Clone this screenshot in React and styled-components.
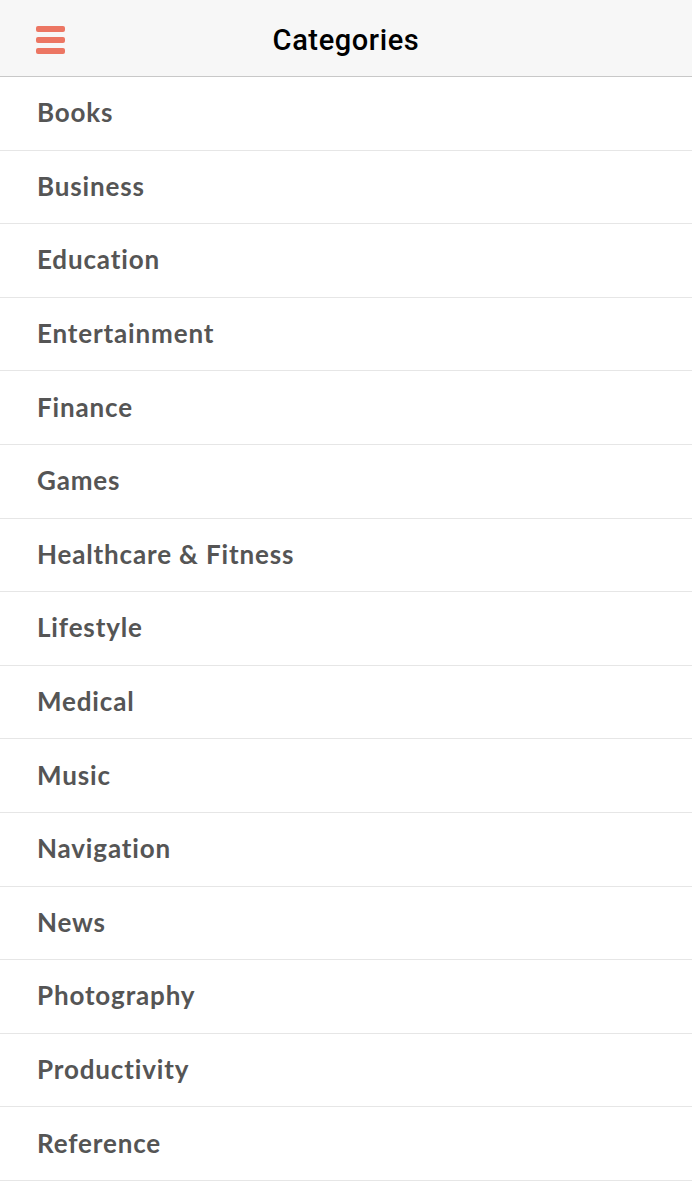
import React from 'react'
import styled, { createGlobalStyle } from 'styled-components'

const GlobalStyle = createGlobalStyle`
  body {
    margin: 0;
    background: #ffffff;
    font-family: 'Lato', 'Noto Sans', sans-serif;
  }
`;

const Screen = styled.div`
  width: 692px;
  height: 1200px;
  overflow: hidden;
  background: #ffffff;
`;

const Header = styled.header`
  height: 77px;
  box-sizing: border-box;
  padding-top: 3px;
  background: #f7f7f7;
  border-bottom: 1px solid #c8c8c8;
  display: grid;
  grid-template-columns: 100px 1fr 100px;
  align-items: center;
`;

const MenuButton = styled.button`
  border: none;
  background: none;
  padding: 0 0 0 36px;
  height: 100%;
  display: flex;
  flex-direction: column;
  justify-content: center;
  gap: 5px;
  cursor: pointer;
`;

const MenuBar = styled.span`
  display: block;
  width: 29px;
  height: 6px;
  border-radius: 2px;
  background: #ec7663;
`;

const Title = styled.h1`
  margin: 0;
  text-align: center;
  font-family: 'Roboto', 'Liberation Sans', sans-serif;
  font-weight: 500;
  font-size: 29px;
  color: #000000;
  letter-spacing: 0.6px;
`;

const List = styled.ul`
  list-style: none;
  margin: 0;
  padding: 0;
`;

const Row = styled.li`
  height: 73.6px;
  box-sizing: border-box;
  border-bottom: 1px solid #e6e6e6;
  display: flex;
  align-items: center;
  padding-left: 37px;
  padding-bottom: 2px;
  font-family: 'Lato', 'Noto Sans', sans-serif;
  font-weight: 700;
  font-size: 26px;
  letter-spacing: 0.85px;
  color: #555555;
`;

const categories = [
  'Books',
  'Business',
  'Education',
  'Entertainment',
  'Finance',
  'Games',
  'Healthcare & Fitness',
  'Lifestyle',
  'Medical',
  'Music',
  'Navigation',
  'News',
  'Photography',
  'Productivity',
  'Reference',
];

const App = () => {
  return (
    <Screen>
      <GlobalStyle />
      <Header>
        <MenuButton aria-label="Menu">
          <MenuBar />
          <MenuBar />
          <MenuBar />
        </MenuButton>
        <Title>Categories</Title>
        <div />
      </Header>
      <List>
        {categories.map((name) => (
          <Row key={name}>{name}</Row>
        ))}
      </List>
    </Screen>
  )
}

export default App
